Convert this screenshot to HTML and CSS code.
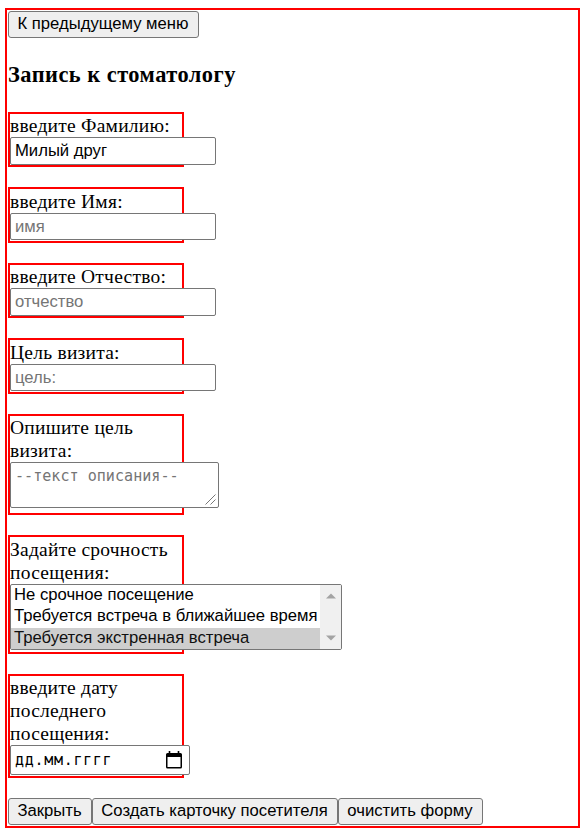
FILE: index.html
```html
<!DOCTYPE html>
<html lang="ru">
<head>
<meta charset="utf-8">
<title>Запись к стоматологу</title>
<link rel="stylesheet" href="styles.css">
</head>
<body>
<main class="modal">
  <button class="btn btn-back" type="button">К предыдущему меню</button>
  <h3 class="title">Запись к стоматологу</h3>
  <form class="form">
    <div class="field field-a"><label class="label">введите Фамилию:</label><input class="input tall" type="text" value="Милый друг"></div>
    <div class="field field-b"><label class="label label-b">введите Имя:</label><input class="input" type="text" placeholder="имя"></div>
    <div class="field field-a"><label class="label">введите Отчество:</label><input class="input tall" type="text" placeholder="отчество"></div>
    <div class="field field-b"><label class="label label-b">Цель визита:</label><input class="input" type="text" placeholder="цель:"></div>
    <div class="field field-text"><label class="label">Опишите цель<br>визита:</label>
      <div class="textarea">--текст описания--
        <svg class="grip" width="11" height="11" viewBox="0 0 11 11"><path d="M.5 10.5 10.5.5M5.500 10.500l5-5" fill="none" stroke="#555" stroke-width=".8"/></svg>
      </div>
    </div>
    <div class="field field-select"><label class="label label-select">Задайте срочность<br>посещения:</label>
      <div class="listbox">
        <ul class="options">
          <li class="option">Не срочное посещение</li>
          <li class="option">Требуется встреча в ближайшее время</li>
          <li class="option selected">Требуется экстренная встреча</li>
        </ul>
        <div class="scrollbar">
          <svg width="10" height="6" viewBox="0 0 10 6"><path d="M0 5.500h10L5 .5z" fill="#a3a3a3"/></svg>
          <svg width="10" height="6" viewBox="0 0 10 6"><path d="M0 .5h10L5 5.500z" fill="#a3a3a3"/></svg>
        </div>
      </div>
    </div>
    <div class="field field-date"><label class="label">введите дату<br>последнего<br>посещения:</label>
      <div class="date"><span class="date-text">дд.мм.гггг</span>
        <svg width="16" height="18" viewBox="0 0 16 18"><path fill="#000" fill-rule="evenodd" d="M2.700 0h1.600v2h7.400V0h1.600v2h1.200Q16 2 16 3.500V16Q16 17.500 14.500 17.500h-13Q0 17.500 0 16V3.500Q0 2 1.500 2h1.200zM1.500 6v10h13V6z"/></svg>
      </div>
    </div>
    <div class="actions">
      <button class="btn btn-close" type="button">Закрыть</button>
      <button class="btn btn-create" type="button">Создать карточку посетителя</button>
      <button class="btn btn-reset" type="button">очистить форму</button>
    </div>
  </form>
</main>
</body>
</html>
```
FILE: styles.css
```css
* { box-sizing: border-box; }
body {
  margin: 8px 5px 0;
  background: #fff;
  color: #000;
  font-family: "Liberation Serif", "Times New Roman", serif;
  font-size: 19.5px;
}
.modal {
  height: 820px;
  border: 2px solid #f00;
  padding: 1px;
  overflow: hidden;
}
.btn {
  display: block;
  height: 27px;
  padding: 0 1px 2px 0;
  border: 1px solid #767676;
  border-radius: 3px;
  background: #efefef;
  color: #000;
  font: 16.67px/24px "Liberation Sans", Arial, sans-serif;
  white-space: nowrap;
}
.btn-back { width: 191px; }
.title {
  margin: 24px 0 24px;
  font-size: 22.4px;
  letter-spacing: .48px;
  line-height: 26px;
  white-space: nowrap;
}
.form { display: flex; flex-direction: column; gap: 20px; }
.field { width: 176px; border: 2px solid #f00; white-space: nowrap; }
.field-a { height: 55px; }
.field-b { height: 56px; }
.field-text { height: 101px; }
.field-select { height: 119px; }
.field-date { height: 104px; }
.label { display: block; line-height: 23px; letter-spacing: .24px; }
.label-b { padding-top: 1px; }
.label-select { padding-top: 1px; }
.input {
  display: block;
  width: 206px;
  height: 27px;
  padding: 0 4px;
  border: 1px solid #767676;
  border-radius: 2px;
  background: #fff;
  color: #000;
  font: 16.67px "Liberation Sans", Arial, sans-serif;
}
.tall { height: 28px; padding-bottom: 1px; }
.input::placeholder { color: #757575; }
.textarea {
  position: relative;
  width: 209px;
  height: 46px;
  padding: 4px 4px 0;
  border: 1px solid #767676;
  border-radius: 2px;
  background: #fff;
  color: #757575;
  font: 15.1px/19px "DejaVu Sans Mono", monospace;
}
.grip { position: absolute; right: 2px; bottom: 2px; }
.listbox {
  display: flex;
  width: 332px;
  height: 66px;
  border: 1px solid #767676;
  border-radius: 2px;
  background: #fff;
  overflow: hidden;
}
.options { flex: 1; margin: 0; padding: 0; list-style: none; }
.option {
  height: 21px;
  padding-left: 3px;
  font: 16.67px/20px "Liberation Sans", Arial, sans-serif;
}
.option.selected { height: 22px; margin-top: 1px; line-height: 19px; background: #cecece; color: #101010; }
.scrollbar {
  display: flex;
  flex-direction: column;
  align-items: center;
  justify-content: space-between;
  width: 21px;
  padding: 8px 0;
  background: #f0f0f0;
}
.date {
  display: flex;
  align-items: center;
  justify-content: space-between;
  width: 180px;
  height: 30px;
  padding: 0 7px 1px 4px;
  border: 1px solid #767676;
  border-radius: 2px;
  background: #fff;
}
.date-text { font: 15px "DejaVu Sans Mono", monospace; letter-spacing: .7px; }
.actions { display: flex; }
.btn-close { width: 84px; }
.btn-create { width: 246px; }
.btn-reset { width: 145px; }
```
